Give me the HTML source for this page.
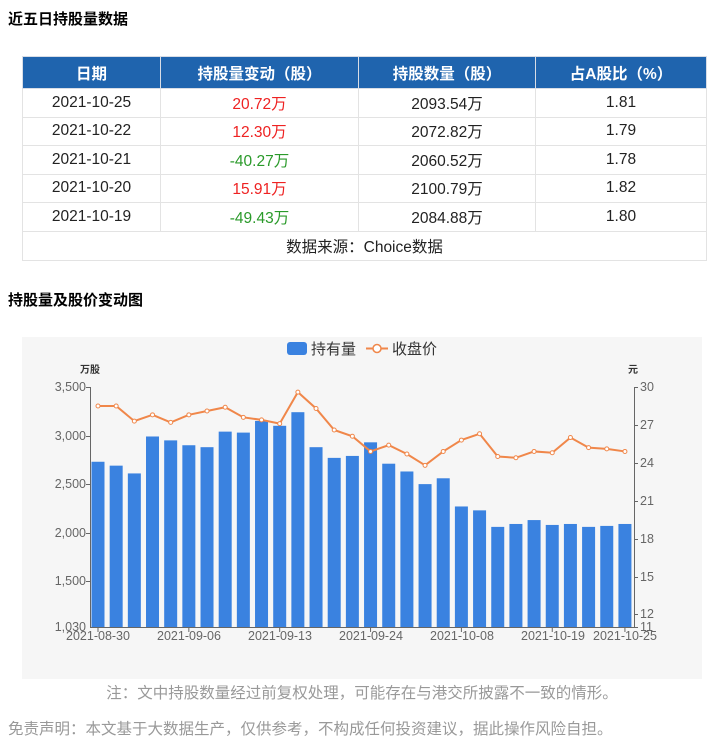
<!DOCTYPE html>
<html><head><meta charset="utf-8"><style>
body{margin:0;width:724px;height:748px;background:#fff;font-family:"Liberation Sans","Noto Sans CJK SC",sans-serif;position:relative;overflow:hidden;color:#333}
.t{position:absolute;left:8px;font-size:15px;font-weight:bold;color:#000}
table{position:absolute;left:22px;top:56px;width:685px;border-collapse:collapse;font-size:15.5px;text-align:center}
th{background:#1f64ae;color:#fff;font-weight:bold;height:31px;border:1px solid #d8dde6;padding:0}
td{height:27.5px;border:1px solid #e3e3e3;padding:0;color:#222}
.r{color:#e22}.g{color:#2a9a2a}
.n{position:absolute;font-size:15.5px;color:#999}
</style></head><body>
<div class="t" style="top:8px">近五日持股量数据</div>
<table>
<tr><th style="width:137px">日期</th><th style="width:197px">持股量变动（股）</th><th style="width:176px">持股数量（股）</th><th>占A股比（%）</th></tr>
<tr><td>2021-10-25</td><td class="r">20.72万</td><td>2093.54万</td><td>1.81</td></tr>
<tr><td>2021-10-22</td><td class="r">12.30万</td><td>2072.82万</td><td>1.79</td></tr>
<tr><td>2021-10-21</td><td class="g">-40.27万</td><td>2060.52万</td><td>1.78</td></tr>
<tr><td>2021-10-20</td><td class="r">15.91万</td><td>2100.79万</td><td>1.82</td></tr>
<tr><td>2021-10-19</td><td class="g">-49.43万</td><td>2084.88万</td><td>1.80</td></tr>
<tr><td colspan="4" style="height:28px">数据来源：Choice数据</td></tr>
</table>
<div class="t" style="top:289px">持股量及股价变动图</div>
<svg style="position:absolute;left:0;top:0" width="724" height="748" font-family="Liberation Sans, Noto Sans CJK SC, sans-serif">
<rect x="22" y="337" width="680" height="342" fill="#f6f6f6"/>
<rect x="287" y="342" width="20" height="13" rx="3" fill="#3a82e0"/>
<text x="311" y="354" font-size="15" fill="#333">持有量</text>
<line x1="366" y1="348.5" x2="388" y2="348.5" stroke="#f0874a" stroke-width="2"/>
<circle cx="377" cy="348.5" r="4" fill="#fff" stroke="#f0874a" stroke-width="1.5"/>
<text x="392" y="354" font-size="15" fill="#333">收盘价</text>
<text x="80" y="373" font-size="10" font-weight="bold" fill="#333">万股</text>
<text x="628" y="373" font-size="10" font-weight="bold" fill="#333">元</text>
<g font-size="12.5" fill="#666" text-anchor="end">
<text x="86" y="391">3,500</text><text x="86" y="440">3,000</text><text x="86" y="488">2,500</text><text x="86" y="537">2,000</text><text x="86" y="585">1,500</text><text x="86" y="631">1,030</text>
</g>
<g font-size="12.5" fill="#666">
<text x="640" y="391">30</text><text x="640" y="429">27</text><text x="640" y="467">24</text><text x="640" y="505">21</text><text x="640" y="543">18</text><text x="640" y="581">15</text><text x="640" y="618">12</text><text x="640" y="631">11</text>
</g>
<g id="bars"></g>
<line x1="90.5" y1="387" x2="90.5" y2="627" stroke="#666"/>
<line x1="634.5" y1="387" x2="634.5" y2="627" stroke="#666"/>
<line x1="90" y1="627.5" x2="635" y2="627.5" stroke="#666"/>
<g id="ticks" stroke="#666"></g>
<polyline id="line" fill="none" stroke="#f0874a" stroke-width="2"/>
<g id="dots"></g>
<g font-size="12.5" fill="#666" text-anchor="middle">
<text x="98" y="640">2021-08-30</text><text x="189" y="640">2021-09-06</text><text x="280" y="640">2021-09-13</text><text x="371" y="640">2021-09-24</text><text x="462" y="640">2021-10-08</text><text x="553" y="640">2021-10-19</text><text x="625" y="640">2021-10-25</text>
</g>
</svg>
<div class="n" style="left:0;width:724px;text-align:center;top:681px">注：文中持股数量经过前复权处理，可能存在与港交所披露不一致的情形。</div>
<div class="n" style="left:8px;top:717px">免责声明：本文基于大数据生产，仅供参考，不构成任何投资建议，据此操作风险自担。</div>
<script>
var b=[2730,2690,2610,2990,2950,2900,2880,3040,3030,3150,3100,3240,2880,2770,2790,2930,2710,2630,2500,2560,2270,2230,2060,2090,2130,2080,2090,2060,2070,2090];
var p=[28.5,28.5,27.3,27.8,27.2,27.8,28.1,28.4,27.6,27.4,27.1,29.6,28.3,26.6,26.1,24.9,25.4,24.7,23.8,24.9,25.8,26.3,24.5,24.4,24.9,24.8,26.0,25.2,25.1,24.9];
var ns="http://www.w3.org/2000/svg",g=document.getElementById('bars'),d=document.getElementById('dots'),pts=[];
for(var i=0;i<30;i++){var x=98+i*18.17,y=627-(b[i]-1030)*0.0972;
var r=document.createElementNS(ns,'rect');r.setAttribute('x',x-6.5);r.setAttribute('y',y);r.setAttribute('width',13);r.setAttribute('height',627-y);r.setAttribute('fill','#3a82e0');g.appendChild(r);
var py=627-(p[i]-11)*12.63;pts.push(x+','+py);
var c=document.createElementNS(ns,'circle');c.setAttribute('cx',x);c.setAttribute('cy',py);c.setAttribute('r',2);c.setAttribute('fill','#fff');c.setAttribute('stroke','#f0874a');d.appendChild(c);}
document.getElementById('line').setAttribute('points',pts.join(' '));
var t=document.getElementById('ticks');[0,5,10,15,20,25,29].forEach(function(i){var x=98+i*18.17;var l=document.createElementNS(ns,'line');l.setAttribute('x1',x);l.setAttribute('x2',x);l.setAttribute('y1',627);l.setAttribute('y2',632);t.appendChild(l);});
[387,425,463,501,539,577,614,627].forEach(function(y){var l=document.createElementNS(ns,'line');l.setAttribute('x1',634);l.setAttribute('x2',638);l.setAttribute('y1',y+.5);l.setAttribute('y2',y+.5);t.appendChild(l);});
[387,436,484,533,581].forEach(function(y){var l=document.createElementNS(ns,'line');l.setAttribute('x1',86);l.setAttribute('x2',90);l.setAttribute('y1',y+.5);l.setAttribute('y2',y+.5);t.appendChild(l);});
</script>
</body></html>
